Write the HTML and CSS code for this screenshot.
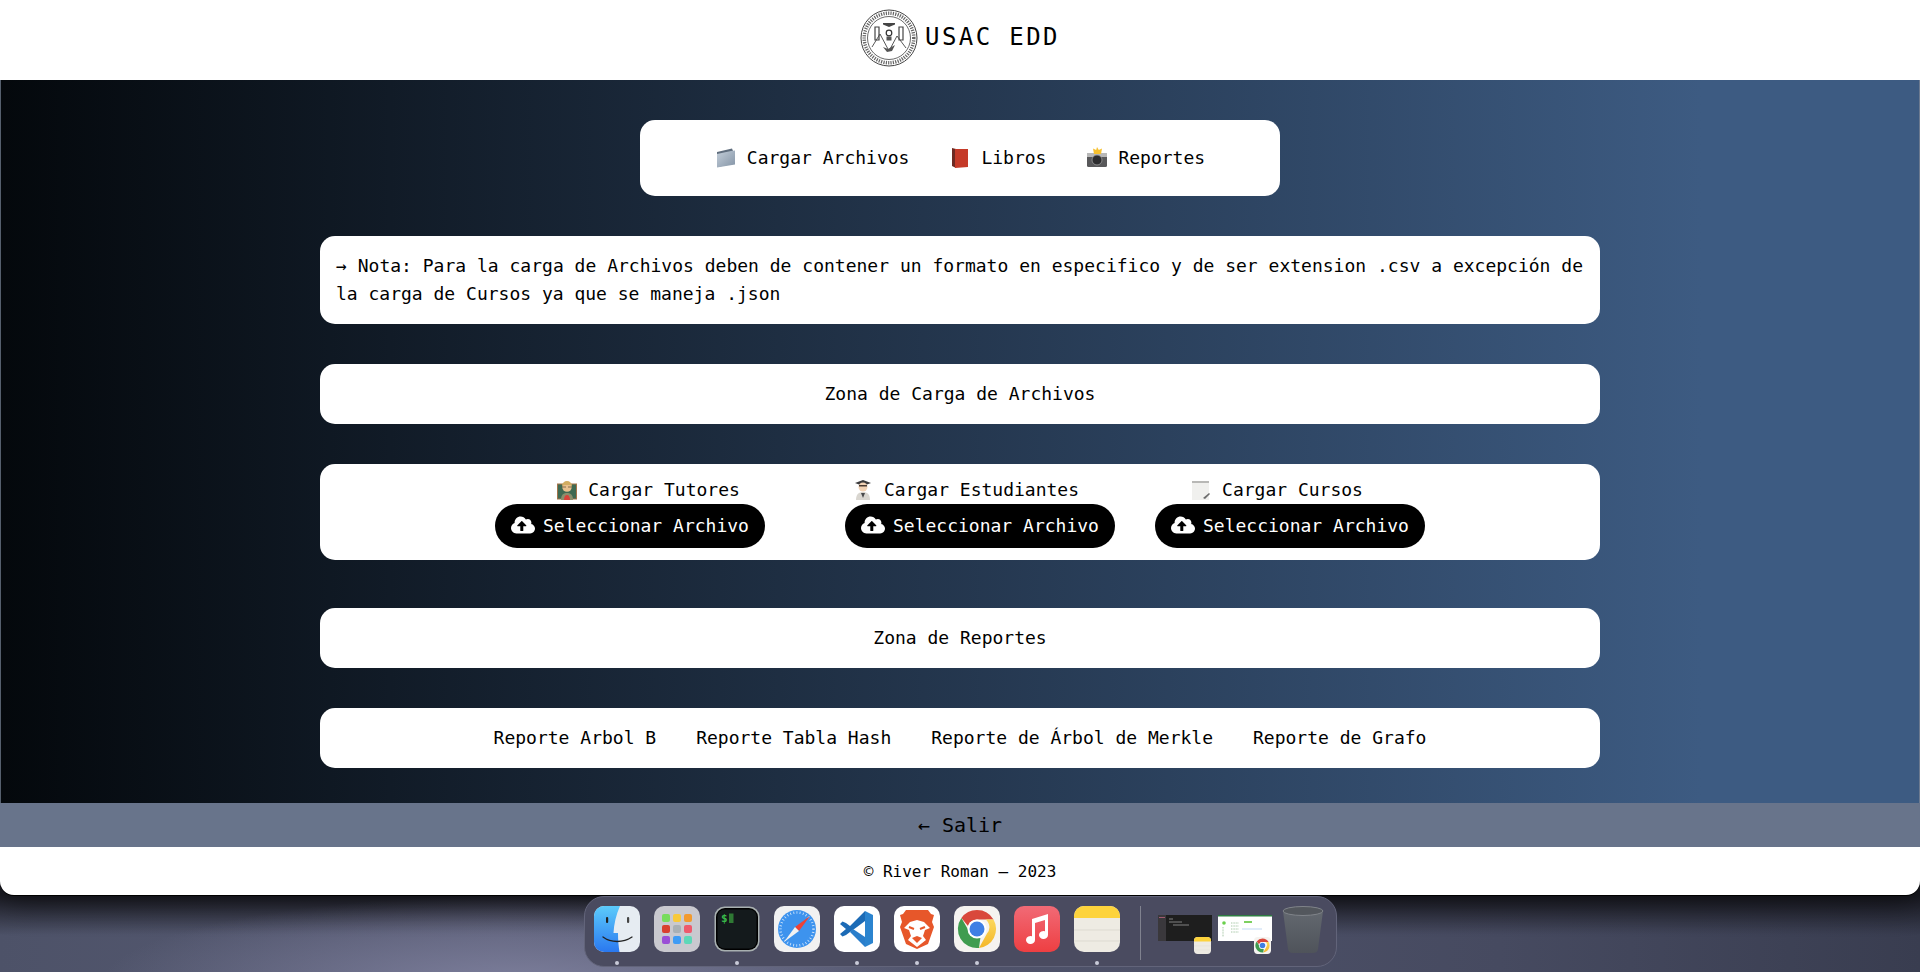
FILE: index.html
```html
<!DOCTYPE html>
<html lang="en">
  <head>
    <meta charset="UTF-8" />
    <meta name="viewport" content="width=device-width, initial-scale=1.0" />
    <title>USAC EDD</title>
    <link rel="stylesheet" href="styles.css">
  </head>

  <body>
    <svg class="defs" width="0" height="0">
      <defs>
        <symbol id="cloud" viewBox="0 0 640 512">
          <path fill="currentColor" d="M537.6 226.6c4.1-10.7 6.4-22.4 6.4-34.6 0-53-43-96-96-96-19.7 0-38.1 6-53.3 16.2C367 64.2 315.3 32 256 32c-88.4 0-160 71.6-160 160 0 2.7.1 5.4.2 8.1C40.2 219.8 0 273.2 0 336c0 79.5 64.5 144 144 144h368c70.7 0 128-57.3 128-128 0-61.9-44-113.6-102.4-125.4zM393.4 288H328v112c0 8.8-7.2 16-16 16h-48c-8.8 0-16-7.2-16-16V288h-65.4c-14.3 0-21.4-17.2-11.3-27.3l105.4-105.4c6.2-6.2 16.4-6.2 22.6 0l105.4 105.4c10.1 10.1 2.9 27.3-11.3 27.3z"/>
        </symbol>
        <linearGradient id="chromeYellow" x1="0" y1="0" x2="0" y2="1">
          <stop offset="0" stop-color="#fbd75b"/><stop offset="1" stop-color="#f4b72a"/>
        </linearGradient>
        <linearGradient id="finderBlue" x1="0" y1="0" x2="0" y2="1">
          <stop offset="0" stop-color="#5ccbfb"/><stop offset="1" stop-color="#2a78ef"/>
        </linearGradient>
        <linearGradient id="folderFront" x1="0" y1="0" x2="1" y2="1">
          <stop offset="0" stop-color="#c3ced9"/><stop offset="1" stop-color="#8494a6"/>
        </linearGradient>
        <symbol id="chrome" viewBox="0 0 46 46">
          <rect width="46" height="46" rx="10" fill="#f5f3f0"/>
          <path d="M23 4a19 19 0 0 1 16.5 9.5H23a9.500 9.500 0 0 0-9 6.500L7.400 12A19 19 0 0 1 23 4z" fill="#d9483b"/>
          <path d="M39.500 13.500A19 19 0 0 1 25 41.900l8-14.400a9.500 9.500 0 0 0-1.500-14z" fill="url(#chromeYellow)"/>
          <path d="M7.400 12l8 14a9.500 9.500 0 0 0 11 5.700L25 41.900A19 19 0 0 1 7.400 12z" fill="#3f9c4f"/>
          <circle cx="23" cy="23" r="9.500" fill="#fff"/>
          <circle cx="23" cy="23" r="7.500" fill="#3f7fe4"/>
        </symbol>
        <symbol id="notes" viewBox="0 0 46 46">
          <rect width="46" height="46" rx="10" fill="#eeebe3"/>
          <path d="M0 12V10A10 10 0 0 1 10 0h26a10 10 0 0 1 10 10v2z" fill="#fdd33c"/>
          <path d="M0 24h46M0 35h46" stroke="#d6d2c8" stroke-width=".7"/>
        </symbol>
      </defs>
    </svg>

    <div class="window">
      <header class="topbar">
        <svg class="seal" viewBox="0 0 58 58">
          <circle cx="29" cy="29" r="28" fill="#fff" stroke="#444" stroke-width="1"/>
          <circle cx="29" cy="29" r="24.800" fill="none" stroke="#666" stroke-width="3.500" stroke-dasharray="1.200 1.200"/>
          <circle cx="29" cy="29" r="21.500" fill="#fff" stroke="#444" stroke-width=".8"/>
          <path d="M12 38l8-13 9 17 8-15 9 12" fill="none" stroke="#444" stroke-width=".9"/>
          <path d="M23 14h12v1.500l-6 2.500-6-2.500z" fill="#444"/>
          <path d="M15 18h4v13h-4zM39 18h4v13h-4z" fill="none" stroke="#444" stroke-width="1.200"/>
          <circle cx="29" cy="24" r="2.800" fill="none" stroke="#333" stroke-width="1.200"/>
          <rect x="26.500" y="27.500" width="5" height="4" fill="#555"/>
          <path d="M23 38l5 2 7-4-3 6-5 1z" fill="#555"/>
        </svg>
        <span class="brand">USAC EDD</span>
      </header>

      <main class="content">
        <nav class="card nav-card">
          <a class="nav-link">
            <svg class="emoji" viewBox="0 0 22 22">
              <path d="M2 5l15-3.500 1 2.500v13L2 20z" fill="#5f6d7d"/>
              <path d="M2 7l14-3 4-.5v14L2 20.500z" fill="url(#folderFront)"/>
            </svg>
            Cargar Archivos
          </a>
          <a class="nav-link">
            <svg class="emoji" viewBox="0 0 22 22">
              <path d="M3 1l4 1v19l-4-2z" fill="#6e2a22"/>
              <path d="M6 2h13v18l-13 1z" fill="#c53a28"/>
            </svg>
            Libros
          </a>
          <a class="nav-link">
            <svg class="emoji" viewBox="0 0 22 22">
              <rect x="1" y="6" width="20" height="14" rx="1.500" fill="#58585a"/>
              <rect x="1" y="6" width="20" height="4" fill="#b8b8b8"/>
              <circle cx="11" cy="13" r="5" fill="#2c2c2e" stroke="#9a9a9a" stroke-width=".8"/>
              <path d="M11 0l1.800 3 3.200-1.500-1 5.500H8L7 1.500 10.200 3z" fill="#f6c02f"/>
            </svg>
            Reportes
          </a>
        </nav>

        <section class="card note-card">
          → Nota: Para la carga de Archivos deben de contener un formato en especifico y de ser extension .csv a excepción de la carga de Cursos ya que se maneja .json
        </section>

        <section class="card title-card">Zona de Carga de Archivos</section>

        <section class="card upload-card">
          <div class="upload-group upload-first">
            <label class="upload-label shift-c">
              <svg class="emoji small" viewBox="0 0 20 20">
                <rect x=".5" y="4" width="19" height="15" fill="#3f6a52" stroke="#a5744a"/>
                <circle cx="10" cy="7" r="4.800" fill="#e8c08e"/>
                <path d="M5 6a5 5 0 0 1 10 0l-2-1H7z" fill="#d2ad62"/>
                <path d="M5 7h4M11 7h4" stroke="#6c5a3c" stroke-width=".8"/>
                <path d="M4 20c0-6 3-7 6-7s6 1 6 7z" fill="#8a8f6c"/>
                <path d="M7 20c0-3 1-5 3-5s3 2 3 5z" fill="#d8433a"/>
              </svg>
              Cargar Tutores
            </label>
            <button class="upload-btn"><svg class="cloud"><use href="#cloud"/></svg>Seleccionar Archivo</button>
          </div>
          <div class="upload-group">
            <label class="upload-label shift-a">
              <svg class="emoji small" viewBox="0 0 20 20">
                <path d="M10 0l8 3-8 3-8-3z" fill="#3a3a3c"/>
                <circle cx="10" cy="7" r="4.500" fill="#f2d3b5"/>
                <path d="M6 5h8v1.500H6z" fill="#4a3a30"/>
                <path d="M3 20c0-6 3-8 7-8s7 2 7 8z" fill="#d9d6d0"/>
                <path d="M8 13h4l-2 5z" fill="#4a4a4c"/>
              </svg>
              Cargar Estudiantes
            </label>
            <button class="upload-btn"><svg class="cloud"><use href="#cloud"/></svg>Seleccionar Archivo</button>
          </div>
          <div class="upload-group">
            <label class="upload-label shift-b">
              <svg class="emoji small" viewBox="0 0 20 20">
                <path d="M1 1h17v19H1z" fill="#f0f0ee"/>
                <path d="M1 1h17v2H1z" fill="#b8b8b6"/>
                <path d="M12 18l6-5 1 1-5 5z" fill="#6c6c6c"/>
              </svg>
              Cargar Cursos
            </label>
            <button class="upload-btn"><svg class="cloud"><use href="#cloud"/></svg>Seleccionar Archivo</button>
          </div>
        </section>

        <section class="card title-card title-reports">Zona de Reportes</section>

        <section class="card reports-card">
          <a>Reporte Arbol B</a>
          <a>Reporte Tabla Hash</a>
          <a>Reporte de Árbol de Merkle</a>
          <a>Reporte de Grafo</a>
        </section>
      </main>

      <div class="exit-bar">← Salir</div>
      <footer class="footer">© River Roman – 2023</footer>
    </div>

    <div class="dock">
      <div class="dock-item on">
        <svg class="dock-icon" viewBox="0 0 46 46">
          <rect width="46" height="46" rx="10" fill="#e6ecf2"/>
          <path d="M10 0h16c-4 9-6 18-6.500 27H24c0 7 .5 13 1.500 19H10A10 10 0 0 1 0 36V10A10 10 0 0 1 10 0z" fill="url(#finderBlue)"/>
          <rect x="12" y="11" width="2.200" height="6" rx="1" fill="#222"/>
          <rect x="33" y="11" width="2.200" height="6" rx="1" fill="#444"/>
          <path d="M9 31c8 6 20 6 29 0" fill="none" stroke="#222" stroke-width="1.300" stroke-linecap="round"/>
        </svg>
      </div>
      <div class="dock-item">
        <svg class="dock-icon" viewBox="0 0 46 46">
          <rect width="46" height="46" rx="10" fill="#c9c9cf"/>
          <rect x="8" y="8" width="8" height="8" rx="2" fill="#78dc5c"/>
          <rect x="19" y="8" width="8" height="8" rx="2" fill="#f8c93a"/>
          <rect x="30" y="8" width="8" height="8" rx="2" fill="#f29a2e"/>
          <rect x="8" y="19" width="8" height="8" rx="2" fill="#d9402e"/>
          <rect x="19" y="19" width="8" height="8" rx="2" fill="#a9b0b5"/>
          <rect x="30" y="19" width="8" height="8" rx="2" fill="#ee5a6c"/>
          <rect x="8" y="30" width="8" height="8" rx="2" fill="#9a4fd6"/>
          <rect x="19" y="30" width="8" height="8" rx="2" fill="#3f9cf5"/>
          <rect x="30" y="30" width="8" height="8" rx="2" fill="#5ed8b8"/>
        </svg>
      </div>
      <div class="dock-item on">
        <svg class="dock-icon" viewBox="0 0 46 46">
          <rect x=".5" y=".5" width="45" height="45" rx="10" fill="#a8b0b0"/>
          <rect x="2" y="2" width="42" height="42" rx="9" fill="#000"/>
          <rect x="3.500" y="3.500" width="39" height="39" rx="7" fill="#141a1c"/>
          <text x="7" y="16" class="term-prompt">$</text>
          <rect x="15" y="7.500" width="4.500" height="9.500" fill="#2f7a34"/>
        </svg>
      </div>
      <div class="dock-item">
        <svg class="dock-icon" viewBox="0 0 46 46">
          <rect width="46" height="46" rx="10" fill="#f1f1f1"/>
          <circle cx="23" cy="23" r="19" fill="#3d93ee"/>
          <circle cx="23" cy="23" r="16.500" fill="none" stroke="#d7e9fb" stroke-width="2.500" stroke-dasharray=".8 2.400"/>
          <path d="M36 10L25 25l-4-4z" fill="#ee4136"/>
          <path d="M10 36l11-15 4 4z" fill="#f2f2f2"/>
        </svg>
      </div>
      <div class="dock-item on">
        <svg class="dock-icon" viewBox="0 0 46 46">
          <rect width="46" height="46" rx="10" fill="#fff"/>
          <path d="M31 5l8 4v28l-8 4z" fill="#2b84cf"/>
          <path d="M31 5v10l-8 6-7 5-4 3-3.500 1.500L6 28l6-5-6-5 2.500-2.500L12 17l4 3z" fill="#1c6bb6"/>
          <path d="M31 31v10L16 26l3-3z" fill="#2a7ecb"/>
        </svg>
      </div>
      <div class="dock-item on">
        <svg class="dock-icon" viewBox="0 0 46 46">
          <rect width="46" height="46" rx="10" fill="#fff"/>
          <path d="M12 4h22l3 4 3 1-2 7 2 5-6 17-11 5-11-5-6-17 2-5-2-7 3-1z" fill="#e7572a"/>
          <path d="M23 14l-7 2-6 6 5 2 2 6-3 4 9 7 9-7-3-4 2-6 5-2-6-6z" fill="#fff"/>
          <path d="M23 30l-5 2 5 5 5-5z" fill="#e7572a"/>
          <path d="M15 21l5 2M31 21l-5 2" stroke="#e7572a" stroke-width="2"/>
        </svg>
      </div>
      <div class="dock-item on">
        <svg class="dock-icon"><use href="#chrome"/></svg>
      </div>
      <div class="dock-item">
        <svg class="dock-icon" viewBox="0 0 46 46">
          <defs>
            <linearGradient id="musicBg" x1="0" y1="0" x2="0" y2="1">
              <stop offset="0" stop-color="#f16a76"/><stop offset="1" stop-color="#ee3f42"/>
            </linearGradient>
          </defs>
          <rect width="46" height="46" rx="10" fill="url(#musicBg)"/>
          <path d="M18 13l16-5v21a4.500 4 0 1 1-3-3.800V14l-10 3v17a4.500 4 0 1 1-3-3.800z" fill="#fff"/>
        </svg>
      </div>
      <div class="dock-item on">
        <svg class="dock-icon"><use href="#notes"/></svg>
      </div>
      <div class="dock-sep"></div>
      <div class="dock-thumb thumb-term">
        <svg class="thumb-art" viewBox="0 0 54 28">
          <rect width="8" height="26" fill="#3a383c"/>
          <rect x="8" width="46" height="26" fill="#1e1e1e"/>
          <rect x="1" y="2" width="6" height="1" fill="#a05a70"/>
          <path d="M11 4h4M11 7h13M15 10h16" stroke="#999" stroke-width=".8"/>
        </svg>
        <svg class="thumb-badge"><use href="#notes"/></svg>
      </div>
      <div class="dock-thumb thumb-web">
        <svg class="thumb-art" viewBox="0 0 54 28">
          <rect width="54" height="26" fill="#fff"/>
          <rect width="54" height="1.500" fill="#2e7d42"/>
          <circle cx="6" cy="8" r="1.800" fill="#6ad04c"/>
          <path d="M5 12v10M13 8h8M13 11h8M13 14h8M13 17h8" stroke="#a8c8a8" stroke-width="1" stroke-dasharray="1 .6"/>
          <path d="M26 7h8" stroke="#7ed060" stroke-width="2"/>
          <path d="M24 14h20" stroke="#a9c8ee" stroke-width=".7"/>
        </svg>
        <svg class="thumb-badge"><use href="#chrome"/></svg>
      </div>
      <div class="dock-item trash">
        <svg class="trash-icon" viewBox="0 0 42 48">
          <defs>
            <linearGradient id="trashBg" x1="0" y1="0" x2="0" y2="1">
              <stop offset="0" stop-color="#63686f"/><stop offset="1" stop-color="#4f535a"/>
            </linearGradient>
          </defs>
          <path d="M1 5l5 38q.5 4 5 4h20q4.500 0 5-4l5-38z" fill="url(#trashBg)"/>
          <ellipse cx="21" cy="5" rx="20" ry="4.500" fill="#53575d" stroke="#80848a"/>
        </svg>
      </div>
    </div>
  </body>
</html>
```

FILE: styles.css
```css
* {
  box-sizing: border-box;
}

html,
body {
  height: 100%;
}

body {
  margin: 0;
  overflow: hidden;
  font-family: "DejaVu Sans Mono", "Liberation Mono", monospace;
  color: #000;
  background:
    radial-gradient(ellipse 420px 90px at 520px 985px, #7d7f9c 0%, rgba(125, 127, 156, 0) 100%),
    linear-gradient(to bottom, rgba(20, 20, 26, 0.85) 895px, rgba(20, 20, 26, 0) 935px),
    linear-gradient(to right, #4d5268 0, #585b74 500px, #464a60 1500px, #393d50 100%);
}

.defs {
  display: block;
  height: 0;
}

.window {
  height: 895px;
  display: flex;
  flex-direction: column;
  border-radius: 0 0 14px 14px;
  overflow: hidden;
  box-shadow: 0 1px 0 #000, 0 6px 30px rgba(0, 0, 0, 0.55);
}

.topbar {
  height: 80px;
  flex: none;
  display: flex;
  align-items: center;
  justify-content: center;
  gap: 7px;
  padding-bottom: 6px;
  background-color: white;
}

.seal {
  width: 58px;
  height: 58px;
  margin-top: 2px;
}

.brand {
  font-size: 24px;
  letter-spacing: 2.4px;
}

.content {
  flex: 1;
  display: flex;
  flex-direction: column;
  align-items: center;
  gap: 40px;
  padding-top: 40px;
  background: linear-gradient(to right, #04080c 0, #3d5b82 1700px, #3d5b82 100%);
  border-left: 1px solid #555f6d;
  border-right: 1px solid #6c7a90;
}

.card {
  width: 1280px;
  background-color: white;
  border-radius: 15px;
  font-size: 18px;
  line-height: 28px;
}

.nav-card {
  width: 640px;
  height: 76px;
  display: flex;
  align-items: center;
  justify-content: center;
}

.nav-link {
  display: flex;
  align-items: center;
  padding: 0 20px;
}

.emoji {
  width: 22px;
  height: 22px;
  margin-right: 10px;
  flex: none;
}

.emoji.small {
  width: 20px;
  height: 20px;
  margin-right: 11px;
}

.note-card {
  padding: 16px 17px 16px 16px;
  text-align: justify;
}

.title-card {
  height: 60px;
  padding: 16px;
  text-align: center;
}

.title-reports {
  margin-top: 8px;
}

.upload-card {
  display: flex;
  justify-content: center;
  gap: 40px;
  padding: 12px 0;
}

.upload-group {
  width: 270px;
  display: flex;
  flex-direction: column;
}

.upload-first {
  width: 310px;
}

.upload-label {
  display: flex;
  align-items: center;
  justify-content: center;
  height: 28px;
}

.shift-a {
  padding-right: 28px;
}

.shift-b {
  padding-right: 26px;
}

.shift-c {
  padding-right: 3px;
}

.upload-btn {
  width: 270px;
  height: 44px;
  display: flex;
  align-items: center;
  gap: 8px;
  padding: 0 16px 2px;
  border: none;
  border-radius: 22px;
  background-color: #000;
  color: white;
  font-family: inherit;
  font-size: 18px;
}

.cloud {
  width: 24px;
  height: 20px;
  flex: none;
}

.reports-card {
  height: 60px;
  display: flex;
  align-items: center;
  justify-content: center;
  gap: 40px;
}

.exit-bar {
  height: 44px;
  flex: none;
  display: flex;
  align-items: center;
  justify-content: center;
  background-color: #68748b;
  font-size: 20px;
}

.footer {
  height: 48px;
  flex: none;
  display: flex;
  align-items: center;
  justify-content: center;
  background-color: white;
  font-size: 16px;
}

.dock {
  width: 753px;
  height: 71px;
  margin: 1px auto 0;
  padding: 9px 0 0 9px;
  display: flex;
  background-color: #4a4b60;
  border: 1px solid #62647a;
  border-radius: 20px;
}

.dock-item {
  width: 46px;
  margin-right: 14px;
  flex: none;
  display: flex;
  flex-direction: column;
  align-items: center;
}

.dock-item.on::after {
  content: "";
  width: 4px;
  height: 4px;
  margin-top: 9px;
  border-radius: 50%;
  background-color: #c9cbd8;
}

.dock-icon {
  width: 46px;
  height: 46px;
  flex: none;
}

.dock-sep {
  width: 1px;
  height: 54px;
  margin: 0 17px 0 6px;
  background-color: #80828f;
  flex: none;
}

.dock-thumb {
  width: 54px;
  margin-right: 6px;
  position: relative;
  flex: none;
}

.thumb-art {
  display: block;
  width: 54px;
  height: 28px;
  margin-top: 9px;
}

.thumb-badge {
  position: absolute;
  width: 17px;
  height: 17px;
  right: 1px;
  top: 31px;
}

.trash {
  width: 42px;
  margin: -1px 0 0 4px;
}

.trash-icon {
  width: 42px;
  height: 50px;
}

.term-prompt {
  font-family: "DejaVu Sans Mono", monospace;
  font-size: 11px;
  font-weight: bold;
  fill: #38b84a;
}
```
